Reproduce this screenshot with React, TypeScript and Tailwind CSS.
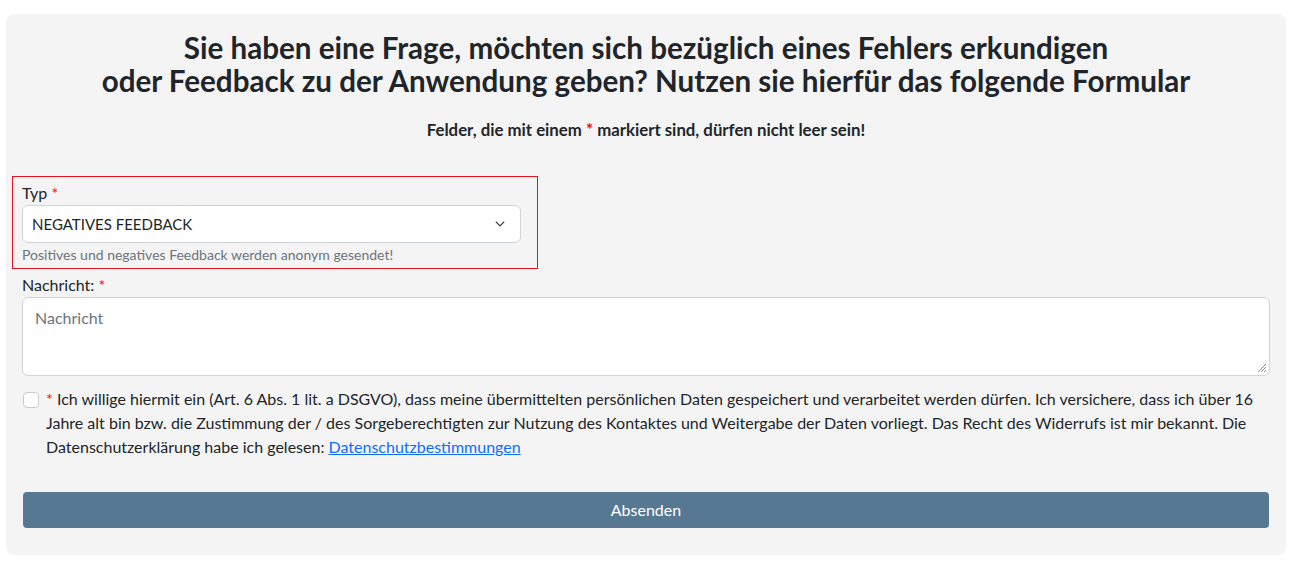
import React from "react";

export default function App() {
  return (
    <div className="w-[1299px] h-[567px] bg-white pt-[14px] pl-[6px]" style={{ fontFamily: "Lato, 'Liberation Sans', sans-serif" }}>
      <div className="w-[1280px] h-[541px] bg-[#f4f4f4] rounded-[8px] px-[16px] pt-[17px] text-[#212529]">
        <h3 className="text-center font-bold text-[29.6px] leading-[33px]">
          Sie haben eine Frage, möchten sich bezüglich eines Fehlers erkundigen
          <br />
          oder Feedback zu der Anwendung geben? Nutzen sie hierfür das folgende Formular
        </h3>
        <p className="text-center font-bold text-[16.8px] leading-[21px] mt-[22px]">
          Felder, die mit einem <span className="text-[#ff0000]">*</span> markiert sind, dürfen nicht leer sein!
        </p>

        <div className="ml-[-10px] w-[526px] mt-[36px] border border-[#e8161c] pl-[9px] pr-[16px] pt-[4px] pb-[3px]">
          <label className="block text-[16px] leading-[24px]">
            Typ <span className="text-[#ff0000]">*</span>
          </label>
          <div className="relative h-[38px] bg-white border border-[#ced4da] rounded-[6px] flex items-center pl-[9px] text-[15px]">
            NEGATIVES FEEDBACK
            <svg className="absolute right-[13px] top-[13px]" width="14" height="10" viewBox="0 0 16 16">
              <path d="M2 5l6 6 6-6" fill="none" stroke="#343a40" strokeWidth="2.2" strokeLinecap="round" strokeLinejoin="round" />
            </svg>
          </div>
          <div className="text-[14px] leading-[20px] text-[#6c757d] mt-[2px]">
            Positives und negatives Feedback werden anonym gesendet!
          </div>
        </div>

        <label className="block text-[16px] leading-[24px] mt-[4px]">
          Nachricht: <span className="text-[#ff0000]">*</span>
        </label>
        <div className="relative h-[79px] bg-white border border-[#ced4da] rounded-[6px] px-[12px] pt-[8px] text-[16px] text-[#6c757d]">
          Nachricht
          <svg className="absolute right-[2px] bottom-[2px]" width="12" height="12" viewBox="0 0 12 12">
            <path d="M11 3L3 11M11 6L6 11M11 9L9 11" stroke="#8a8a8a" strokeWidth="1" />
          </svg>
        </div>

        <div className="flex mt-[11px] text-[16px] leading-[24px]">
          <div className="w-[16px] h-[16px] shrink-0 bg-white border border-[#c8ccd0] rounded-[4px] mt-[5px] ml-[1px] mr-[7px]" />
          <p>
            <span className="text-[#ff0000]">*</span> Ich willige hiermit ein (Art. 6 Abs. 1 lit. a DSGVO), dass meine übermittelten persönlichen Daten gespeichert und verarbeitet werden dürfen. Ich versichere, dass ich über 16 Jahre alt bin bzw. die Zustimmung der / des Sorgeberechtigten zur Nutzung des Kontaktes und Weitergabe der Daten vorliegt. Das Recht des Widerrufs ist mir bekannt. Die Datenschutzerklärung habe ich gelesen:{" "}
            <a className="text-[#0d6efd] underline">Datenschutzbestimmungen</a>
          </p>
        </div>

        <button className="mt-[33px] ml-[1px] w-[1246px] h-[36px] bg-[#577892] text-white rounded-[4px] text-[16px]">
          Absenden
        </button>
      </div>
    </div>
  );
}
